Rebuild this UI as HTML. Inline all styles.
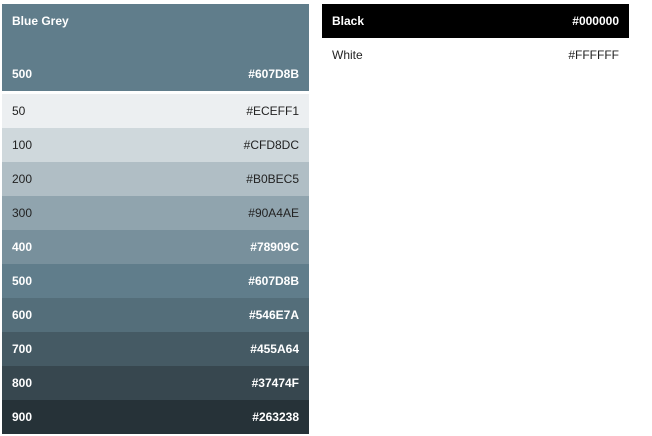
<!DOCTYPE html>
<html><head><style>
body{margin:0;width:652px;height:436px;background:#fff;font-family:"Liberation Sans",sans-serif;font-size:12px;position:relative;overflow:hidden}
.col{position:absolute;width:307px}
.r{height:34px;display:flex;justify-content:space-between;align-items:center;padding:0 10px 0 10px;box-sizing:border-box}
.d{color:#fff;font-weight:bold}
.l{color:#222}
.hdr{height:87px;background:#607D8B;color:#fff;font-weight:bold;position:relative;box-sizing:border-box}
</style></head><body>
<div class="col" style="left:2px;top:4px">
<div class="hdr"><div style="position:absolute;left:10px;top:10px">Blue Grey</div>
<div style="position:absolute;left:10px;right:10px;bottom:10px;display:flex;justify-content:space-between"><span>500</span><span>#607D8B</span></div></div>
<div style="height:3px"></div>
<div class="r l" style="background:#ECEFF1"><span>50</span><span>#ECEFF1</span></div>
<div class="r l" style="background:#CFD8DC"><span>100</span><span>#CFD8DC</span></div>
<div class="r l" style="background:#B0BEC5"><span>200</span><span>#B0BEC5</span></div>
<div class="r l" style="background:#90A4AE"><span>300</span><span>#90A4AE</span></div>
<div class="r d" style="background:#78909C"><span>400</span><span>#78909C</span></div>
<div class="r d" style="background:#607D8B"><span>500</span><span>#607D8B</span></div>
<div class="r d" style="background:#546E7A"><span>600</span><span>#546E7A</span></div>
<div class="r d" style="background:#455A64"><span>700</span><span>#455A64</span></div>
<div class="r d" style="background:#37474F"><span>800</span><span>#37474F</span></div>
<div class="r d" style="background:#263238"><span>900</span><span>#263238</span></div>
</div>
<div class="col" style="left:322px;top:4px">
<div class="r d" style="background:#000"><span>Black</span><span>#000000</span></div>
<div class="r l" style="background:#fff"><span>White</span><span>#FFFFFF</span></div>
</div>
</body></html>
